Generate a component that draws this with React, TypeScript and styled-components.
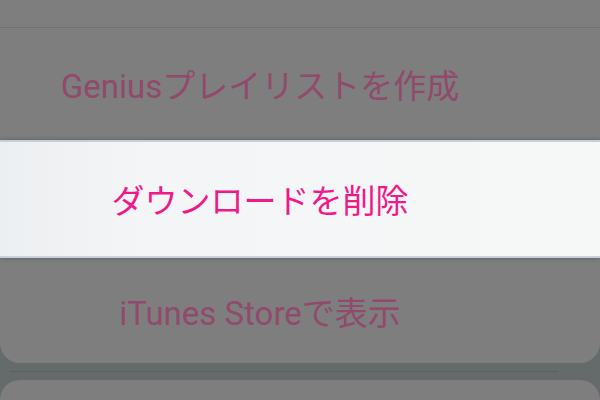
import styled, { createGlobalStyle } from "styled-components";

const GlobalStyle = createGlobalStyle`
  html, body {
    margin: 0;
    padding: 0;
    width: 600px;
    height: 400px;
    overflow: hidden;
    background: #646b6a;
  }
`;

const Screen = styled.div`
  width: 600px;
  height: 400px;
  display: flex;
  flex-direction: column;
  overflow: hidden;
  background: #646b6a;
  font-family: Roboto, "Noto Sans CJK JP", sans-serif;
`;

const Sheet = styled.div`
  display: flex;
  flex-direction: column;
  background: #7e7e7e;
  border-radius: 0 0 20px 20px;
  overflow: hidden;
`;

const Row = styled.div<{ $height: number }>`
  height: ${(p) => p.$height}px;
  flex-shrink: 0;
  display: flex;
  align-items: center;
  justify-content: center;
  padding-right: 80px;
  font-size: 33px;
  color: #914a6c;
`;

const Hairline = styled.div`
  height: 1px;
  background: #6c7473;
`;

const Highlighted = styled.div`
  height: 114px;
  flex-shrink: 0;
  display: flex;
  align-items: center;
  justify-content: center;
  padding-right: 80px;
  font-size: 33px;
  color: #f0198a;
  background: linear-gradient(90deg, #eceff1 0%, #f4f5f6 25%, #f6f7f7 100%);
  border-top: 2px solid #c6cfd8;
  border-bottom: 2px solid #cbd1d8;
  box-shadow: 0 0 4px rgba(40, 40, 40, 0.45);
  position: relative;
  z-index: 1;
`;

const Gap = styled.div`
  height: 17px;
  flex-shrink: 0;
  display: flex;
  flex-direction: column;
  justify-content: center;
  padding-left: 10px;
`;

const Underline = styled.div`
  width: 548px;
  height: 1px;
  background: #5a605f;
`;

const CancelCard = styled.div`
  flex: 1;
  background: #7e7e7e;
  border-radius: 20px 20px 0 0;
`;

export default function App() {
  return (
    <>
      <GlobalStyle />
      <Screen>
        <Sheet>
          <Row $height={27} />
          <Hairline />
          <Row $height={112}>Geniusプレイリストを作成</Row>
          <Highlighted>ダウンロードを削除</Highlighted>
          <Row $height={105}>iTunes Storeで表示</Row>
        </Sheet>
        <Gap>
          <Underline />
        </Gap>
        <CancelCard />
      </Screen>
    </>
  );
}
